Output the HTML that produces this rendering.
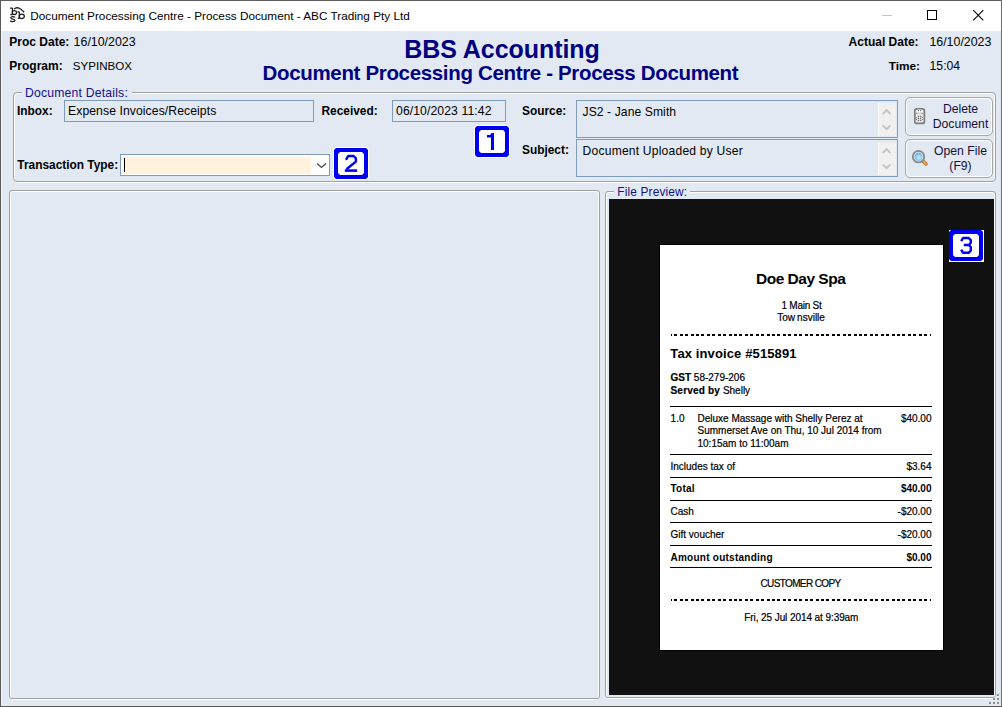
<!DOCTYPE html>
<html><head><meta charset="utf-8"><style>
html,body{margin:0;padding:0;width:1002px;height:707px;overflow:hidden;background:#E2E9F3}
body{position:relative;font-family:"Liberation Sans",sans-serif}
.t{position:absolute;white-space:nowrap;line-height:1}
</style></head><body>
<div style="position:absolute;left:0px;top:0px;width:1002px;height:707px;background:#E2E9F3"></div>
<div style="position:absolute;left:1px;top:1px;width:1000px;height:30px;background:#fff"></div>
<div style="position:absolute;left:0px;top:0px;width:1002px;height:1px;background:#5f5f5f"></div>
<div style="position:absolute;left:0px;top:0px;width:1px;height:707px;background:#5a5a5a"></div>
<div style="position:absolute;left:1001px;top:0px;width:1px;height:707px;background:#6f6f6f"></div>
<div style="position:absolute;left:0px;top:706px;width:1002px;height:1px;background:#5a5a5a"></div>
<div style="position:absolute;left:1px;top:31px;width:1px;height:675px;background:#EEF3F9"></div>
<svg style="position:absolute;left:0;top:0" width="30" height="30" viewBox="0 0 30 30">
<g fill="none" stroke="#1e1e1e" stroke-width="1.25">
<path d="M10 8.1 H12.6 M12.4 8 V14.9 M10.4 14.6 H12.4"/><ellipse cx="14.4" cy="12.6" rx="2.1" ry="2"/>
<path d="M14 9.2 Q17.6 5.2 24.2 12.2"/>
<path d="M17.5 11.9 H19.4 M19.3 11.8 V18.7 M17.9 18.4 H19.3"/><ellipse cx="21.8" cy="16.3" rx="2.5" ry="2.2"/>
<path d="M15 17.6 Q14.6 16.7 12.7 16.7 Q10.8 16.7 10.9 17.9 Q11 18.9 12.8 19.1 Q15 19.3 15 20.5 Q15 21.5 12.7 21.5 Q10.8 21.5 10.3 20.6"/>
</g></svg>
<div class="t" style="left:30.3px;top:10px;font-size:11.75px;color:#000;">Document Processing Centre - Process Document - ABC Trading Pty Ltd</div>
<div style="position:absolute;left:882px;top:15px;width:10px;height:1px;background:#c4c4c4"></div>
<div style="position:absolute;left:927px;top:10px;width:10px;height:10px;border:1px solid #000;box-sizing:border-box"></div>
<svg style="position:absolute;left:972px;top:9px" width="13" height="13" viewBox="0 0 13 13"><path d="M1.2 1.2 L11.3 11.3 M11.3 1.2 L1.2 11.3" stroke="#000" stroke-width="1.05"/></svg>
<div class="t" style="left:9.3px;top:36px;font-size:12px;font-weight:bold;color:#000;">Proc Date:</div>
<div class="t" style="left:73.6px;top:36px;font-size:12.4px;color:#000;">16/10/2023</div>
<div class="t" style="left:9.3px;top:60px;font-size:12px;font-weight:bold;color:#000;">Program:</div>
<div class="t" style="left:72.8px;top:60px;font-size:11.6px;color:#000;">SYPINBOX</div>
<div class="t" style="left:404.3px;top:37px;font-size:25px;font-weight:bold;color:#000080;letter-spacing:-0.06px">BBS Accounting</div>
<div class="t" style="left:262.6px;top:63px;font-size:20.5px;font-weight:bold;color:#000080;letter-spacing:-0.34px">Document Processing Centre - Process Document</div>
<div class="t" style="left:848.6px;top:36px;font-size:12px;font-weight:bold;color:#000;">Actual Date:</div>
<div class="t" style="left:929.4px;top:36px;font-size:12.4px;color:#000;">16/10/2023</div>
<div class="t" style="left:888.8px;top:61px;font-size:11.8px;font-weight:bold;color:#000;">Time:</div>
<div class="t" style="left:929.6px;top:60px;font-size:12.2px;color:#000;">15:04</div>
<div style="position:absolute;left:14px;top:93px;width:981px;height:90px;box-sizing:border-box;border:1px solid #fff;border-radius:4px"></div>
<div style="position:absolute;left:13px;top:92px;width:983px;height:90px;box-sizing:border-box;border:1px solid #A0A0A0;border-radius:4px"></div>
<div style="position:absolute;left:22px;top:85px;width:110px;height:14px;background:#E2E9F3"></div>
<div class="t" style="left:25.0px;top:87px;font-size:12.2px;color:#14108C;letter-spacing:0.2px">Document Details:</div>
<div class="t" style="left:17.0px;top:106px;font-size:11.9px;font-weight:bold;color:#000;">Inbox:</div>
<div style="position:absolute;left:64px;top:100px;width:250px;height:22px;box-sizing:border-box;border:1px solid #7F9DB9;background:#E2E9F3"></div>
<div class="t" style="left:68.0px;top:105px;font-size:12.2px;color:#000;letter-spacing:0.08px">Expense Invoices/Receipts</div>
<div class="t" style="left:321.5px;top:106px;font-size:11.9px;font-weight:bold;color:#000;">Received:</div>
<div style="position:absolute;left:392px;top:100px;width:114px;height:22px;box-sizing:border-box;border:1px solid #7F9DB9;background:#E2E9F3"></div>
<div class="t" style="left:396.0px;top:105px;font-size:12.2px;color:#000;letter-spacing:0.1px">06/10/2023 11:42</div>
<div class="t" style="left:17.3px;top:160px;font-size:11.9px;font-weight:bold;color:#000;">Transaction Type:</div>
<div style="position:absolute;left:120px;top:154px;width:210px;height:22px;box-sizing:border-box;border:1px solid #7F9DB9;background:#fff"></div>
<div style="position:absolute;left:123px;top:157px;width:188px;height:17px;background:#FFF3DE"></div>
<div style="position:absolute;left:124px;top:158px;width:1px;height:14px;background:#000"></div>
<svg style="position:absolute;left:316px;top:162px" width="11" height="7" viewBox="0 0 11 7"><path d="M1 1.5 L5.5 5.5 L10 1.5" fill="none" stroke="#444" stroke-width="1.2"/></svg>
<div class="t" style="left:522.0px;top:106px;font-size:11.9px;font-weight:bold;color:#000;">Source:</div>
<div class="t" style="left:522.0px;top:145px;font-size:11.9px;font-weight:bold;color:#000;">Subject:</div>
<div style="position:absolute;left:576px;top:100px;width:322px;height:38px;box-sizing:border-box;border:1px solid #7F9DB9;background:#E2E9F3"></div>
<div style="position:absolute;left:576px;top:139px;width:322px;height:38px;box-sizing:border-box;border:1px solid #7F9DB9;background:#E2E9F3"></div>
<div style="position:absolute;left:878px;top:103px;width:18px;height:33px;background:#F0F0F0;border-left:1px solid #fff;box-sizing:border-box"></div>
<svg style="position:absolute;left:878px;top:102px" width="18" height="34" viewBox="0 0 18 34"><path d="M4.8 12 L8.6 8.2 L12.4 12 M4.8 23.4 L8.6 27.2 L12.4 23.4" fill="none" stroke="#C4C4C4" stroke-width="1.9"/></svg>
<div style="position:absolute;left:878px;top:142px;width:18px;height:33px;background:#F0F0F0;border-left:1px solid #fff;box-sizing:border-box"></div>
<svg style="position:absolute;left:878px;top:141px" width="18" height="34" viewBox="0 0 18 34"><path d="M4.8 12 L8.6 8.2 L12.4 12 M4.8 23.4 L8.6 27.2 L12.4 23.4" fill="none" stroke="#C4C4C4" stroke-width="1.9"/></svg>
<div class="t" style="left:582.5px;top:106px;font-size:12.1px;color:#000;letter-spacing:0.1px">JS2 - Jane Smith</div>
<div class="t" style="left:582.6px;top:145px;font-size:12.1px;color:#000;letter-spacing:0.2px">Document Uploaded by User</div>
<div style="position:absolute;left:906px;top:98px;width:86px;height:37px;box-sizing:border-box;border:1px solid #fff;border-radius:5px"></div>
<div style="position:absolute;left:905px;top:97px;width:88px;height:39px;box-sizing:border-box;border:1px solid #A8A8A8;border-radius:5px"></div>
<div style="position:absolute;left:906px;top:140px;width:86px;height:37px;box-sizing:border-box;border:1px solid #fff;border-radius:5px"></div>
<div style="position:absolute;left:905px;top:139px;width:88px;height:39px;box-sizing:border-box;border:1px solid #A8A8A8;border-radius:5px"></div>
<div class="t" style="left:960.5px;top:103px;font-size:12.2px;color:#14103A;transform:translateX(-50%)">Delete</div>
<div class="t" style="left:960.5px;top:118px;font-size:12.2px;color:#14103A;transform:translateX(-50%)">Document</div>
<div class="t" style="left:960.5px;top:145px;font-size:12.2px;color:#14103A;transform:translateX(-50%)">Open File</div>
<div class="t" style="left:960.5px;top:160px;font-size:12.2px;color:#14103A;transform:translateX(-50%)">(F9)</div>
<svg style="position:absolute;left:474px;top:125px" width="37" height="34" viewBox="-1 -1 37 34"><polygon points="2,0 32,0 34,2 34,29 32,31 2,31 0,29 0,2" fill="none" stroke="#fff" stroke-width="2"/><polygon points="2,0 32,0 34,2 34,29 32,31 2,31 0,29 0,2" fill="#0000F0"/><polygon points="6,4 28,4 30,6 30,25 28,27 6,27 4,25 4,6" fill="#fff"/><path d="M12 9 H15 L16.5 7 H19 V24 H16 V11.5 H12 Z" fill="#0000F0"/></svg>
<svg style="position:absolute;left:333px;top:147px" width="37" height="34" viewBox="-1 -1 37 34"><polygon points="2,0 32,0 34,2 34,29 32,31 2,31 0,29 0,2" fill="none" stroke="#fff" stroke-width="2"/><polygon points="2,0 32,0 34,2 34,29 32,31 2,31 0,29 0,2" fill="#0000F0"/><polygon points="6,4 28,4 30,6 30,25 28,27 6,27 4,25 4,6" fill="#fff"/><path d="M12 11.8 L14.2 8 H19.6 L21.9 10.3 V13.6 L12.4 21.2" fill="none" stroke="#0000F0" stroke-width="2.4" stroke-linejoin="bevel"/><rect x="10.8" y="21.3" width="12.4" height="2.6" fill="#0000F0"/></svg>
<svg style="position:absolute;left:913px;top:107px" width="13" height="18" viewBox="0 0 13 18">
<rect x="1.8" y="1.8" width="9.6" height="14.6" rx="2" fill="#E4E4E4" stroke="#7E7E7E" stroke-width="1.7"/>
<path d="M2.6 6.6 Q6.6 4.6 10.6 6.6" fill="none" stroke="#9a9a9a" stroke-width="1"/>
<ellipse cx="6.6" cy="4.1" rx="3.4" ry="1.6" fill="#fff"/>
<g fill="#6a6a6a"><circle cx="5.5" cy="3.6" r="0.65"/><circle cx="7.6" cy="3.6" r="0.65"/>
<circle cx="5.5" cy="9.5" r="0.7"/><circle cx="7.6" cy="9.5" r="0.7"/><circle cx="5.5" cy="11.5" r="0.7"/><circle cx="7.6" cy="11.5" r="0.7"/><circle cx="5.5" cy="13.4" r="0.7"/><circle cx="7.6" cy="13.4" r="0.7"/>
<circle cx="3.5" cy="10.5" r="0.55"/><circle cx="9.6" cy="10.5" r="0.55"/><circle cx="3.5" cy="12.5" r="0.55"/><circle cx="9.6" cy="12.5" r="0.55"/></g>
</svg>
<svg style="position:absolute;left:910px;top:148px" width="19" height="19" viewBox="0 0 19 19">
<defs><radialGradient id="mg" cx="0.55" cy="0.6" r="0.6"><stop offset="0" stop-color="#C8EEFC"/><stop offset="1" stop-color="#5FAEEA"/></radialGradient></defs>
<line x1="13.2" y1="13.2" x2="16" y2="16" stroke="#9a7a50" stroke-width="3.6" stroke-linecap="round"/><line x1="13.2" y1="13.2" x2="16" y2="16" stroke="#F0A030" stroke-width="2.2" stroke-linecap="round"/>
<circle cx="8.5" cy="8.7" r="5.7" fill="#fff" stroke="#8A8A8A" stroke-width="1.9"/>
<circle cx="8.5" cy="8.7" r="4.2" fill="url(#mg)"/>
</svg>
<div style="position:absolute;left:10px;top:191px;width:589px;height:509px;box-sizing:border-box;border:1px solid #fff;border-radius:3px"></div>
<div style="position:absolute;left:9px;top:190px;width:591px;height:509px;box-sizing:border-box;border:1px solid #A0A0A0;border-radius:3px"></div>
<div style="position:absolute;left:606px;top:192px;width:389px;height:507px;box-sizing:border-box;border:1px solid #fff;border-radius:3px"></div>
<div style="position:absolute;left:605px;top:191px;width:391px;height:507px;box-sizing:border-box;border:1px solid #A0A0A0;border-radius:3px"></div>
<div style="position:absolute;left:614px;top:184px;width:76px;height:14px;background:#E2E9F3"></div>
<div class="t" style="left:617.3px;top:187px;font-size:11.9px;color:#14108C;letter-spacing:0.15px">File Preview:</div>
<div style="position:absolute;left:609px;top:199px;width:385px;height:496px;background:#111"></div>
<div style="position:absolute;left:659px;top:244px;width:285px;height:407px;background:#000"></div>
<div style="position:absolute;left:660px;top:245px;width:283px;height:405px;background:#fff"></div>
<svg style="position:absolute;left:948px;top:229px" width="37" height="34" viewBox="-1 -1 37 34"><rect x="0" y="0" width="35" height="32" fill="#fff"/><polygon points="2,0 32,0 34,2 34,29 32,31 2,31 0,29 0,2" fill="#0000F0"/><polygon points="6,4 28,4 30,6 30,25 28,27 6,27 4,25 4,6" fill="#fff"/><path d="M12.2 11.2 L14 8 H19.6 L21.8 10.2 V12.8 L19.9 15 H14.8 M19.9 15 L21.8 17 V20.6 L19.6 22.8 H14 L12.2 19.6" fill="none" stroke="#0000F0" stroke-width="2.4" stroke-linejoin="bevel"/></svg>
<div style="position:absolute;left:997px;top:694px;width:2px;height:2px;background:#8F8F8F"></div>
<div style="position:absolute;left:993px;top:698px;width:2px;height:2px;background:#8F8F8F"></div>
<div style="position:absolute;left:997px;top:698px;width:2px;height:2px;background:#8F8F8F"></div>
<div style="position:absolute;left:989px;top:702px;width:2px;height:2px;background:#8F8F8F"></div>
<div style="position:absolute;left:993px;top:702px;width:2px;height:2px;background:#8F8F8F"></div>
<div style="position:absolute;left:997px;top:702px;width:2px;height:2px;background:#8F8F8F"></div>
<div class="t" style="left:756.0px;top:271px;font-size:15.5px;font-weight:bold;color:#000;letter-spacing:-0.5px">Doe Day Spa</div>
<div class="t" style="left:781.5px;top:301px;font-size:10px;color:#000;letter-spacing:-0.25px;-webkit-text-stroke:0.2px #000">1 Main St</div>
<div class="t" style="left:777.3px;top:313px;font-size:10px;color:#000;;-webkit-text-stroke:0.2px #000">Tow<span style="margin-left:2px">nsville</span></div>
<svg style="position:absolute;left:0;top:334px" width="1002" height="2" shape-rendering="crispEdges"><path d="M671 1h1M674 1h3M680 1h3M685 1h3M691 1h3M696 1h3M701 1h3M707 1h3M712 1h3M718 1h3M723 1h3M729 1h3M734 1h3M739 1h3M745 1h3M750 1h3M756 1h3M761 1h3M767 1h3M772 1h3M777 1h3M783 1h3M788 1h3M794 1h3M799 1h3M805 1h3M810 1h3M816 1h3M821 1h3M826 1h3M832 1h3M837 1h3M843 1h3M848 1h3M854 1h3M859 1h3M864 1h3M870 1h3M875 1h3M881 1h3M886 1h3M892 1h3M897 1h3M902 1h3M908 1h3M913 1h3M919 1h3M924 1h3M930 1h1" stroke="#000" stroke-width="2"/></svg>
<div class="t" style="left:670.3px;top:347px;font-size:13px;font-weight:bold;color:#000;letter-spacing:0.12px">Tax invoice #515891</div>
<div class="t" style="left:670.5px;top:373px;font-size:10px;color:#000;;-webkit-text-stroke:0.2px #000"><b>GST</b> 58-279-206</div>
<div class="t" style="left:670.5px;top:386px;font-size:10px;color:#000;;-webkit-text-stroke:0.2px #000"><b style="letter-spacing:0.2px">Served by</b> Shelly</div>
<div style="position:absolute;left:670px;top:406px;width:262px;height:1px;background:#000"></div>
<div class="t" style="left:670.6px;top:414px;font-size:10px;color:#000;;-webkit-text-stroke:0.2px #000">1.0</div>
<div class="t" style="left:697.5px;top:414px;font-size:10px;color:#000;;-webkit-text-stroke:0.2px #000">Deluxe Massage with Shelly Perez at</div>
<div class="t" style="left:697.5px;top:426px;font-size:10px;color:#000;;-webkit-text-stroke:0.2px #000">Summerset Ave on Thu, 10 Jul 2014 from</div>
<div class="t" style="left:697.5px;top:439px;font-size:10px;color:#000;;-webkit-text-stroke:0.2px #000">10:15am to 11:00am</div>
<div class="t" style="left:931.5px;top:414px;font-size:10px;color:#000;transform:translateX(-100%);-webkit-text-stroke:0.2px #000">$40.00</div>
<div style="position:absolute;left:670px;top:454px;width:262px;height:1px;background:#000"></div>
<div class="t" style="left:670.5px;top:462px;font-size:10px;color:#000;;-webkit-text-stroke:0.2px #000">Includes tax of</div>
<div class="t" style="left:931.5px;top:462px;font-size:10px;color:#000;transform:translateX(-100%);-webkit-text-stroke:0.2px #000">$3.64</div>
<div class="t" style="left:670.5px;top:484px;font-size:10px;font-weight:bold;color:#000;letter-spacing:0.25px">Total</div>
<div class="t" style="left:931.5px;top:484px;font-size:10px;font-weight:bold;color:#000;transform:translateX(-100%)">$40.00</div>
<div class="t" style="left:670.5px;top:507px;font-size:10px;color:#000;;-webkit-text-stroke:0.2px #000">Cash</div>
<div class="t" style="left:931.5px;top:507px;font-size:10px;color:#000;transform:translateX(-100%);-webkit-text-stroke:0.2px #000">-$20.00</div>
<div class="t" style="left:670.5px;top:530px;font-size:10px;color:#000;;-webkit-text-stroke:0.2px #000">Gift voucher</div>
<div class="t" style="left:931.5px;top:530px;font-size:10px;color:#000;transform:translateX(-100%);-webkit-text-stroke:0.2px #000">-$20.00</div>
<div class="t" style="left:670.5px;top:553px;font-size:10px;font-weight:bold;color:#000;letter-spacing:0.25px">Amount outstanding</div>
<div class="t" style="left:931.5px;top:553px;font-size:10px;font-weight:bold;color:#000;transform:translateX(-100%)">$0.00</div>
<div style="position:absolute;left:670px;top:477px;width:262px;height:1px;background:#000"></div>
<div style="position:absolute;left:670px;top:500px;width:262px;height:1px;background:#000"></div>
<div style="position:absolute;left:670px;top:522px;width:262px;height:1px;background:#000"></div>
<div style="position:absolute;left:670px;top:545px;width:262px;height:1px;background:#000"></div>
<div style="position:absolute;left:670px;top:567px;width:262px;height:1px;background:#000"></div>
<div class="t" style="left:800.5px;top:579px;font-size:10px;color:#000;transform:translateX(-50%);letter-spacing:-0.62px;-webkit-text-stroke:0.2px #000">CUSTOMER COPY</div>
<svg style="position:absolute;left:0;top:599px" width="1002" height="2" shape-rendering="crispEdges"><path d="M671 1h1M674 1h3M680 1h3M685 1h3M691 1h3M696 1h3M701 1h3M707 1h3M712 1h3M718 1h3M723 1h3M729 1h3M734 1h3M739 1h3M745 1h3M750 1h3M756 1h3M761 1h3M767 1h3M772 1h3M777 1h3M783 1h3M788 1h3M794 1h3M799 1h3M805 1h3M810 1h3M816 1h3M821 1h3M826 1h3M832 1h3M837 1h3M843 1h3M848 1h3M854 1h3M859 1h3M864 1h3M870 1h3M875 1h3M881 1h3M886 1h3M892 1h3M897 1h3M902 1h3M908 1h3M913 1h3M919 1h3M924 1h3M930 1h1" stroke="#000" stroke-width="2"/></svg>
<div class="t" style="left:801.3px;top:613px;font-size:10px;color:#000;transform:translateX(-50%);letter-spacing:-0.08px;-webkit-text-stroke:0.2px #000">Fri, 25 Jul 2014 at 9:39am</div>
</body></html>
